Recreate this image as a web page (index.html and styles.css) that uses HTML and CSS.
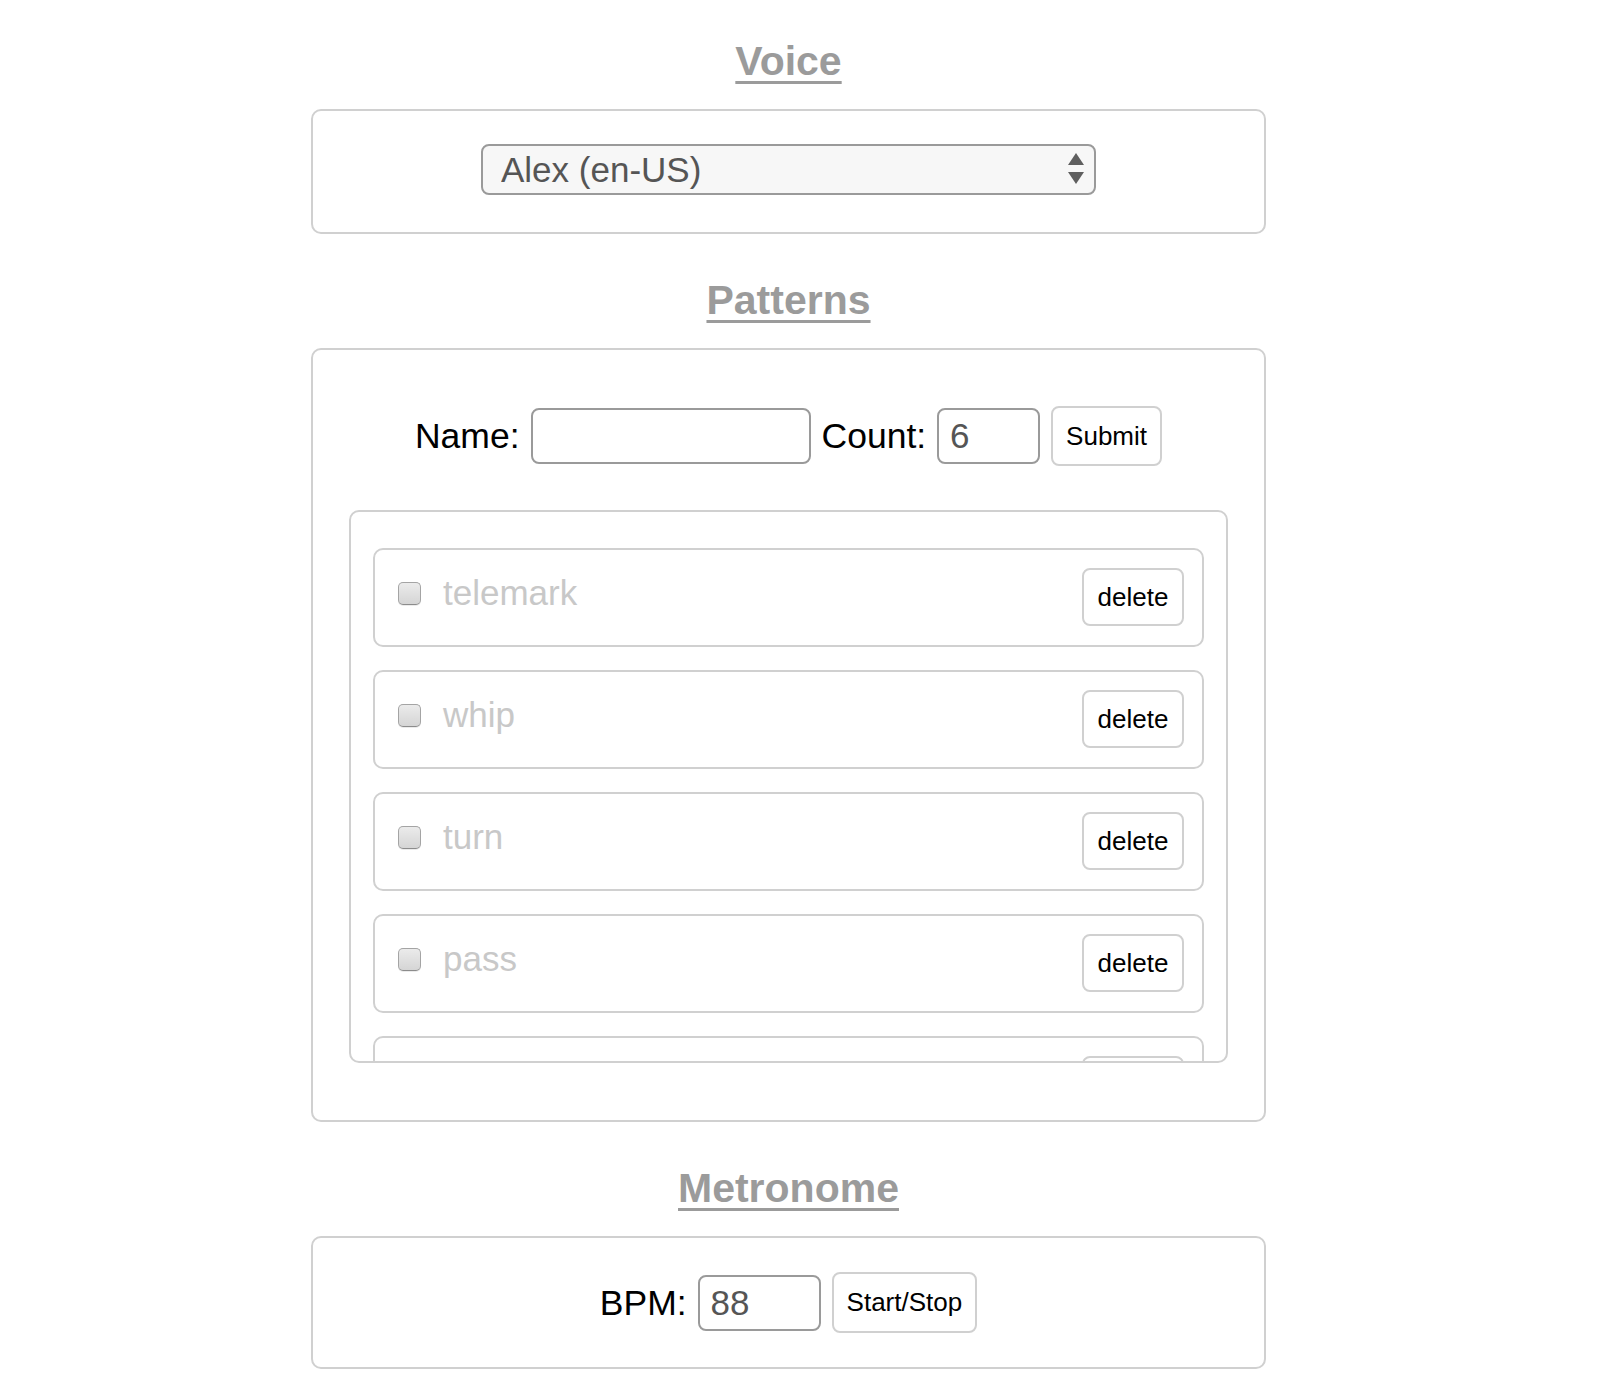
FILE: index.html
```html
<!DOCTYPE html>
<html lang="en">
<head>
<meta charset="utf-8">
<title>Patterns</title>
<link rel="stylesheet" href="styles.css">
</head>
<body>
<div class="page">
  <h2 class="heading">Voice</h2>
  <section class="panel panel-voice">
    <div class="select-wrap">
      <select class="voice-select">
        <option>Alex (en-US)</option>
      </select>
      <svg class="select-arrows" width="16" height="31" viewBox="0 0 16 31" aria-hidden="true">
        <polygon points="8,0 16,12 0,12" fill="#5f5f5f"/>
        <polygon points="0,19 16,19 8,31" fill="#5f5f5f"/>
      </svg>
    </div>
  </section>

  <h2 class="heading">Patterns</h2>
  <section class="panel panel-patterns">
    <form class="form-row">
      <label class="label">Name:</label>
      <input class="field name-field" type="text" value="">
      <label class="label">Count:</label>
      <input class="field count-field" type="text" value="6">
      <button class="btn" type="button">Submit</button>
    </form>
    <div class="list">
      <div class="item">
        <input class="check" type="checkbox">
        <span class="name">telemark</span>
        <button class="btn delete" type="button">delete</button>
      </div>
      <div class="item">
        <input class="check" type="checkbox">
        <span class="name">whip</span>
        <button class="btn delete" type="button">delete</button>
      </div>
      <div class="item">
        <input class="check" type="checkbox">
        <span class="name">turn</span>
        <button class="btn delete" type="button">delete</button>
      </div>
      <div class="item">
        <input class="check" type="checkbox">
        <span class="name">pass</span>
        <button class="btn delete" type="button">delete</button>
      </div>
      <div class="item">
        <input class="check" type="checkbox">
        <span class="name">tuck</span>
        <button class="btn delete" type="button">delete</button>
      </div>
    </div>
  </section>

  <h2 class="heading">Metronome</h2>
  <section class="panel panel-metronome">
    <label class="label">BPM:</label>
    <input class="field bpm-field" type="text" value="88">
    <button class="btn startstop" type="button">Start/Stop</button>
  </section>
</div>
</body>
</html>
```

FILE: styles.css
```css
body {
  margin: 8px;
  font-family: "Liberation Sans", Arial, Helvetica, sans-serif;
  background: #fff;
}

.page {
  width: 955px;
  margin-left: 303px;
  padding-top: 30px;
}

.heading {
  margin: 0 0 25px;
  font-size: 41px;
  line-height: 46px;
  font-weight: bold;
  color: #9b9b9b;
  text-align: center;
  text-decoration: underline;
  text-decoration-thickness: 3px;
  text-underline-offset: 6px;
}

.panel {
  box-sizing: border-box;
  border: 2px solid #d0d0d0;
  border-radius: 10px;
  margin-bottom: 43px;
}

.panel-voice {
  display: flex;
  justify-content: center;
  padding: 33px 0 37px;
}

.select-wrap {
  position: relative;
  width: 615px;
  height: 51px;
}

.voice-select {
  appearance: none;
  -webkit-appearance: none;
  box-sizing: border-box;
  width: 615px;
  height: 51px;
  margin: 0;
  padding: 0 18px;
  border: 2px solid #9a9a9a;
  border-radius: 8px;
  background: #f7f7f7;
  color: #555;
  font-family: "Liberation Sans", Arial, sans-serif;
  font-size: 35px;
  outline: none;
}

.select-arrows {
  position: absolute;
  left: 587px;
  top: 9px;
}

.panel-patterns {
  padding: 56px 36px 57px;
}

.form-row {
  display: flex;
  justify-content: center;
  align-items: center;
  gap: 11px;
  height: 60px;
  margin: 0;
}

.label {
  font-size: 35.5px;
  line-height: 40px;
  color: #000;
}

.field {
  box-sizing: border-box;
  height: 56px;
  margin: 0;
  padding: 0 11px;
  border: 2px solid #9a9a9a;
  border-radius: 8px;
  background: #fff;
  color: #555;
  font-family: "Liberation Sans", Arial, sans-serif;
  font-size: 35px;
  outline: none;
}

.name-field { width: 280px; }
.count-field { width: 103px; }
.bpm-field { width: 123px; }

.btn {
  box-sizing: border-box;
  height: 60px;
  margin: 0;
  padding: 0 13px;
  border: 2px solid #d0d0d0;
  border-radius: 8px;
  background: #fff;
  color: #000;
  font-family: "Liberation Sans", Arial, sans-serif;
  font-size: 26px;
}

.startstop { height: 61px; }

.list {
  box-sizing: border-box;
  height: 553px;
  margin-top: 44px;
  padding: 36px 22px 0;
  border: 2px solid #d0d0d0;
  border-radius: 10px;
  overflow: hidden;
  display: flex;
  flex-direction: column;
  gap: 23px;
}

.item {
  flex-shrink: 0;
  display: flex;
  align-items: center;
  border: 2px solid #d0d0d0;
  border-radius: 10px;
  padding: 18px 18px 19px 23px;
}

.check {
  appearance: none;
  -webkit-appearance: none;
  box-sizing: border-box;
  width: 23px;
  height: 23px;
  margin: 0 22px 8px 0;
  border: 1px solid #a4a4a4;
  border-bottom-color: #8c8c8c;
  border-radius: 5px;
  background: linear-gradient(#ebebeb, #d5d5d5);
  box-shadow: 0 1px 0 rgba(0, 0, 0, 0.08);
}

.name {
  flex: 1;
  font-size: 35px;
  line-height: 40px;
  color: #c8c8c8;
  margin-bottom: 8px;
}

.delete {
  width: 102px;
  height: 58px;
  padding: 0;
}

.panel-metronome {
  display: flex;
  justify-content: center;
  align-items: center;
  gap: 11px;
  padding: 34px 0;
}
```
